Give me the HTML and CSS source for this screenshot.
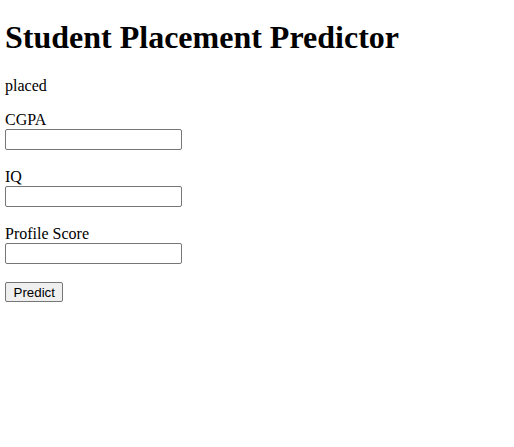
FILE: index.html
```html
<!DOCTYPE html>
<html>
<head>
<meta charset="utf-8">
<title>Student Placement Predictor</title>
<link rel="stylesheet" href="styles.css">
</head>
<body>
<h1 class="title">Student Placement Predictor</h1>
<p class="result">placed</p>
<form class="form">
<div class="field">
<label class="label" for="cgpa">CGPA</label>
<input class="input" id="cgpa" type="text">
</div>
<div class="field">
<label class="label" for="iq">IQ</label>
<input class="input" id="iq" type="text">
</div>
<div class="field">
<label class="label" for="ps">Profile Score</label>
<input class="input" id="ps" type="text">
</div>
<button class="btn" type="button">Predict</button>
</form>
</body>
</html>
```

FILE: styles.css
```css
html, body {
  background: #fff;
}
body {
  margin: 5px;
  font-family: "Liberation Serif", "Times New Roman", serif;
  font-size: 16px;
  color: #000;
}
.title {
  font-size: 32px;
  font-weight: bold;
  margin: 14px 0 21px;
}
.result {
  margin: 16px 0;
}
.form {
  display: flex;
  flex-direction: column;
  align-items: flex-start;
}
.field {
  display: flex;
  flex-direction: column;
  align-items: flex-start;
  margin-bottom: 18px;
}
.label {
  line-height: 18px;
}
.input {
  box-sizing: border-box;
  width: 177px;
  height: 21px;
  border: 1px solid #767676;
  border-radius: 2px;
  padding: 1px 2px;
  margin: 0;
  font-family: "Liberation Sans", Arial, sans-serif;
  font-size: 13.33px;
}
.btn {
  box-sizing: border-box;
  height: 20px;
  padding: 1px 7.5px;
  margin: 0;
  font-family: "Liberation Sans", Arial, sans-serif;
  font-size: 13.33px;
  color: #000;
  background: #efefef;
  border: 1px solid #767676;
  border-radius: 2px;
}
```
